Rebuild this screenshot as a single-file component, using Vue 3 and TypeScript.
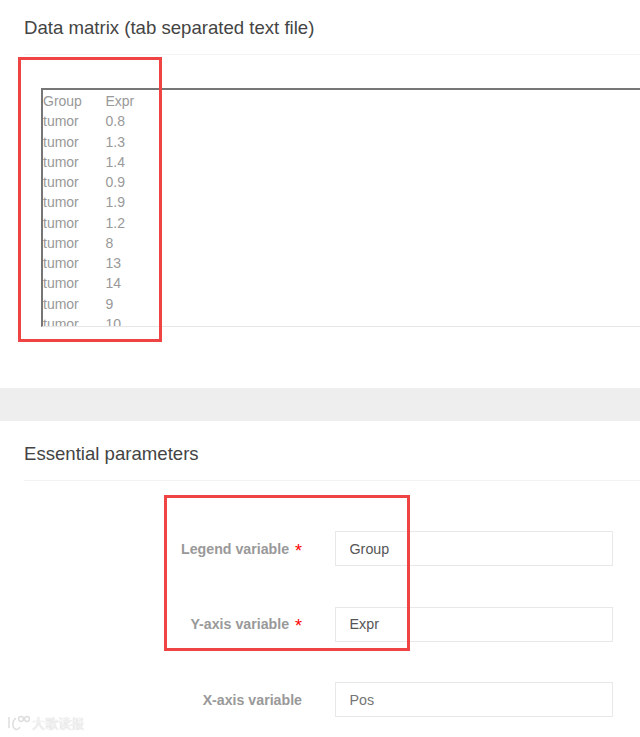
<script setup lang="ts">
interface Row {
  group: string
  expr: string
}

const rows: Row[] = [
  { group: 'Group', expr: 'Expr' },
  { group: 'tumor', expr: '0.8' },
  { group: 'tumor', expr: '1.3' },
  { group: 'tumor', expr: '1.4' },
  { group: 'tumor', expr: '0.9' },
  { group: 'tumor', expr: '1.9' },
  { group: 'tumor', expr: '1.2' },
  { group: 'tumor', expr: '8' },
  { group: 'tumor', expr: '13' },
  { group: 'tumor', expr: '14' },
  { group: 'tumor', expr: '9' },
  { group: 'tumor', expr: '10' },
]
</script>

<template>
  <div class="page">
    <section class="panel top">
      <h2 class="title">Data matrix (tab separated text file)</h2>
      <div class="matrix-wrap">
        <div class="matrix">
          <div v-for="(row, i) in rows" :key="i" class="matrix-row">
            <span class="col-group">{{ row.group }}</span>
            <span>{{ row.expr }}</span>
          </div>
        </div>
      </div>
      <div class="mark mark-matrix"></div>
    </section>

    <div class="band"></div>

    <section class="panel params">
      <h2 class="title">Essential parameters</h2>
      <form class="form">
        <div class="field">
          <label class="label">Legend variable <i class="star">*</i></label>
          <input class="input" value="Group" />
        </div>
        <div class="field">
          <label class="label">Y-axis variable <i class="star">*</i></label>
          <input class="input" value="Expr" />
        </div>
        <div class="field">
          <label class="label">X-axis variable</label>
          <input class="input" placeholder="Pos" />
        </div>
      </form>
      <div class="mark mark-form"></div>
    </section>

    <div class="watermark">
      <svg width="25" height="16" viewBox="0 0 25 16" fill="none" stroke="#dedede" stroke-width="1.5">
        <path d="M3 2v11M10 3C6 6 6 12 9 14c2 1 4 0 5-2" />
        <circle cx="15" cy="4" r="2.4" />
        <circle cx="21" cy="4" r="2.4" />
      </svg>
      <span>大歌读报</span>
    </div>
  </div>
</template>

<style>
html,
body {
  margin: 0;
  background: #fff;
  overflow: hidden;
}
</style>

<style scoped>
.page {
  position: relative;
  width: 640px;
  height: 737px;
  overflow: hidden;
  font-family: "Liberation Sans", Arial, sans-serif;
  color: #444;
}

.panel {
  position: relative;
  padding-left: 24px;
}

.top {
  height: 388px;
}

.title {
  margin: 0;
  height: 55px;
  padding-top: 18px;
  box-sizing: border-box;
  border-bottom: 1px solid #f3f3f3;
  font-size: 18.6px;
  font-weight: 400;
  line-height: 20px;
  color: #444;
}

.matrix-wrap {
  padding: 33px 0 0 16.5px;
}

.matrix {
  height: 235px;
  padding: 1px 0 0 0.5px;
  box-sizing: content-box;
  overflow: hidden;
  border-top: 2px solid #767676;
  border-left: 2px solid #767676;
  border-bottom: 1px solid #e6e6e6;
  font-size: 14px;
  line-height: 20.25px;
  color: #999;
}

.matrix-row {
  display: flex;
}

.col-group {
  width: 62.5px;
}

.band {
  height: 33px;
  background: #eee;
}

.params {
  height: 316px;
}

.params .title {
  height: 60px;
  padding-top: 23px;
}

.form {
  display: flex;
  flex-direction: column;
  gap: 40.5px;
  padding-top: 50px;
}

.field {
  display: flex;
  align-items: center;
  height: 35px;
}

.label {
  width: 278px;
  padding-top: 1px;
  text-align: right;
  font-size: 14.2px;
  font-weight: 700;
  color: #999;
}

.star {
  color: #f00;
  font-size: 18px;
  line-height: 14px;
  font-style: normal;
  font-weight: 400;
  margin-left: 2px;
  vertical-align: -3px;
}

.input {
  margin-left: 33px;
  width: 278px;
  height: 35px;
  box-sizing: border-box;
  padding: 0 14px 0 13.5px;
  border: 1px solid #e8e8e8;
  outline: none;
  font-family: inherit;
  font-size: 14.3px;
  color: #555;
  background: #fff;
}

.input::placeholder {
  color: #757575;
  opacity: 1;
}

.mark {
  position: absolute;
  box-sizing: border-box;
  border: 3px solid #ee4444;
  pointer-events: none;
}

.mark-matrix {
  left: 18px;
  top: 57px;
  width: 144px;
  height: 285px;
}

.mark-form {
  left: 164px;
  top: 74px;
  width: 246px;
  height: 156px;
}

.watermark {
  position: absolute;
  left: 6px;
  bottom: 6px;
  display: flex;
  align-items: center;
  gap: 1px;
  font-family: "Noto Sans CJK SC", sans-serif;
  font-size: 13px;
  line-height: 16px;
  color: #f4f4f4;
  text-shadow: 0 0 1px #c4c4c4;
}
</style>
